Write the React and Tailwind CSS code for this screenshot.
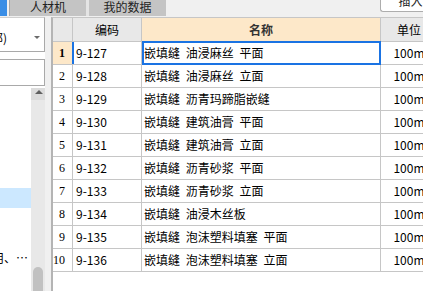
const rows = [
  ["1", "9-127", "嵌填缝 油浸麻丝 平面"],
  ["2", "9-128", "嵌填缝 油浸麻丝 立面"],
  ["3", "9-129", "嵌填缝 沥青玛蹄脂嵌缝"],
  ["4", "9-130", "嵌填缝 建筑油膏 平面"],
  ["5", "9-131", "嵌填缝 建筑油膏 立面"],
  ["6", "9-132", "嵌填缝 沥青砂浆 平面"],
  ["7", "9-133", "嵌填缝 沥青砂浆 立面"],
  ["8", "9-134", "嵌填缝 油浸木丝板"],
  ["9", "9-135", "嵌填缝 泡沫塑料填塞 平面"],
  ["10", "9-136", "嵌填缝 泡沫塑料填塞 立面"],
];

function LeftPanel() {
  return (
    <div className="w-[45px] shrink-0 flex flex-col bg-white">
      <div className="h-[35px] shrink-0 border-t border-b border-r border-t-[#d0d0d0] border-b-[#a9a9a9] border-r-[#a9a9a9] flex items-center pt-[6px] overflow-hidden">
        <span className="-ml-[9px] whitespace-nowrap leading-[12px]">部)</span>
        <svg className="ml-auto mr-[4px]" width="6" height="3" viewBox="0 0 6 3">
          <polygon points="0,0 6,0 3,3" fill="#6b6b6b" />
        </svg>
      </div>
      <div className="h-[7px] shrink-0" />
      <div className="h-[27px] shrink-0 border-t border-b border-r border-[#a9a9a9]" />
      <div className="flex-1 flex min-h-0 mt-[2px]">
        <div className="w-[31px] flex flex-col overflow-hidden">
          <div className="h-[100px] shrink-0" />
          <div className="h-[20px] shrink-0 bg-[#cce8ff]" />
          <div className="h-[40px] shrink-0" />
          <div className="h-[20px] shrink-0 flex items-center whitespace-nowrap">
            <span className="-ml-[8px]">用、…</span>
          </div>
        </div>
        <div className="w-[14px] bg-[#e8e8e8] flex flex-col">
          <div className="h-[12px] shrink-0 bg-[#dcdcdc] flex justify-center pt-[2px] pl-[1px]">
            <svg width="8" height="4" viewBox="0 0 8 4">
              <polygon points="0,4 8,4 4,0" fill="#606060" />
            </svg>
          </div>
          <div className="flex-1" />
          <div className="h-[24px] shrink-0 mx-[2px] rounded-t-[5px] bg-[#c1c1c1]" />
        </div>
      </div>
    </div>
  );
}

function Table() {
  return (
    <div className="flex-1 min-w-0 bg-white border-l-2 border-t border-l-[#b4b4b4] border-t-[#c6c6c6] overflow-hidden flex flex-col">
      <div className="h-[24px] shrink-0 flex">
        <div className="w-[20px] shrink-0 bg-[#e8e8e8] border-r border-b border-[#c6c6c6]" />
        <div className="w-[69px] shrink-0 bg-[#e8e8e8] border-r border-b border-[#c6c6c6] flex items-center justify-center">
          编码
        </div>
        <div className="w-[239px] shrink-0 bg-[#fde8c9] border-r border-b border-[#c6c6c6] flex items-center justify-center font-bold text-[#333]">
          名称
        </div>
        <div className="w-[57px] shrink-0 bg-[#e8e8e8] border-r border-b border-[#c6c6c6] flex items-center justify-center">
          单位
        </div>
      </div>
      {rows.map(([n, code, name], i) => (
        <div key={n} className="h-[23px] shrink-0 flex">
          <div
            className={
              i === 0
                ? "relative w-[20px] shrink-0 bg-[#fde8c9] border-r border-b border-[#c6c6c6] flex items-center justify-end pr-[7px] font-bold font-['Liberation_Serif',serif]"
                : "relative w-[20px] shrink-0 bg-white border-r border-b border-[#c6c6c6] flex items-center justify-end pr-[7px] font-['Liberation_Serif',serif]"
            }
          >
            {n}
            {i === 0 && <div className="absolute top-0 bottom-0 right-[-2px] w-[2px] bg-[#1a73e3]" />}
          </div>
          <div className="w-[69px] shrink-0 border-r border-b border-[#c6c6c6] flex items-center pl-[3px]">
            {code}
          </div>
          <div className="relative w-[239px] shrink-0 border-r border-b border-[#c6c6c6] flex items-center pl-[2px] whitespace-nowrap [word-spacing:3px]">
            {name}
            {i === 0 && (
              <div className="absolute top-[-1px] bottom-[-1px] left-0 right-[-1px] border-2 border-[#1a73e3]" />
            )}
          </div>
          <div className="w-[57px] shrink-0 border-r border-b border-[#c6c6c6] flex items-center justify-center">
            100m
          </div>
        </div>
      ))}
    </div>
  );
}

export default function App() {
  return (
    <div className="w-[423px] h-[291px] overflow-hidden bg-[#f0f0f0] text-[12px] leading-[14px] text-black flex flex-col font-['Noto_Sans_CJK_SC','Noto_Sans',sans-serif]">
      <div className="h-[16px] shrink-0 flex overflow-hidden">
        <div className="w-[7px] shrink-0 bg-[#3a8ee6]" />
        <div className="w-[2px] shrink-0" />
        <div className="w-[77px] shrink-0 bg-[#c4c4c4] border-l border-[#a8a8a8] flex justify-center">
          <span className="leading-[12px] mt-[1px] text-[#222]">人材机</span>
        </div>
        <div className="w-[3px] shrink-0 bg-[#e4e4e4]" />
        <div className="w-[77px] shrink-0 bg-[#c4c4c4] flex justify-center">
          <span className="leading-[12px] mt-[1px] text-[#222]">我的数据</span>
        </div>
        <div className="w-[214px] shrink-0" />
        <div className="w-[60px] shrink-0 h-[12px] bg-white border-l border-b border-[#adadad] rounded-bl-[3px] flex justify-center overflow-hidden">
          <span className="leading-[12px] -mt-[5px] text-[#222]">插入</span>
        </div>
      </div>
      <div className="h-[1px] shrink-0" />
      <div className="flex flex-1 min-h-0">
        <LeftPanel />
        <div className="w-[6px] shrink-0" />
        <Table />
      </div>
    </div>
  );
}
